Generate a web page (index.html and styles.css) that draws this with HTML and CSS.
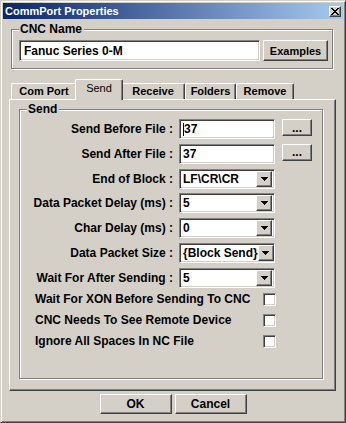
FILE: index.html
```html
<!DOCTYPE html>
<html lang="en">
<head>
    <meta charset="UTF-8">
    <title>CommPort Properties</title>
    <link rel="stylesheet" href="styles.css">
</head>
<body>
    <div class="window">
        <div class="titlebar">
            <span class="title">CommPort Properties</span>
            <span class="close raised">
                <svg width="8" height="7" viewBox="0 0 8 7" shape-rendering="crispEdges">
                    <path d="M0 0h2v1h-2zM6 0h2v1h-2zM1 1h2v1h-2zM5 1h2v1h-2zM2 2h4v1h-4zM3 3h2v1h-2zM2 4h4v1h-4zM1 5h2v1h-2zM5 5h2v1h-2zM0 6h2v1h-2zM6 6h2v1h-2z" fill="#000"/>
                </svg>
            </span>
        </div>

        <div class="group name-group">
            <span class="group-title">CNC Name</span>
            <div class="name-row">
                <div class="field sunken name-field">Fanuc Series 0-M</div>
                <button class="btn raised examples">Examples</button>
            </div>
        </div>

        <div class="tabs">
            <div class="tab tab-com">Com Port</div>
            <div class="tab tab-send active">Send</div>
            <div class="tab tab-receive">Receive</div>
            <div class="tab tab-folders">Folders</div>
            <div class="tab tab-remove">Remove</div>
        </div>

        <div class="panel">
            <div class="group send-group">
                <span class="group-title">Send</span>

                <div class="row">
                    <label class="row-label">Send Before File :</label>
                    <div class="field sunken"><span class="caret"></span>37</div>
                    <button class="btn raised dots">...</button>
                </div>
                <div class="row">
                    <label class="row-label">Send After File :</label>
                    <div class="field sunken">37</div>
                    <button class="btn raised dots">...</button>
                </div>
                <div class="row">
                    <label class="row-label">End of Block :</label>
                    <div class="field sunken combo"><span class="combo-text">LF\CR\CR</span><span class="drop raised"><svg width="7" height="4" viewBox="0 0 7 4" shape-rendering="crispEdges"><path d="M0 0h7v1h-7zM1 1h5v1h-5zM2 2h3v1h-3zM3 3h1v1h-1z" fill="#000"/></svg></span></div>
                </div>
                <div class="row">
                    <label class="row-label">Data Packet Delay (ms) :</label>
                    <div class="field sunken combo"><span class="combo-text">5</span><span class="drop raised"><svg width="7" height="4" viewBox="0 0 7 4" shape-rendering="crispEdges"><path d="M0 0h7v1h-7zM1 1h5v1h-5zM2 2h3v1h-3zM3 3h1v1h-1z" fill="#000"/></svg></span></div>
                </div>
                <div class="row">
                    <label class="row-label">Char Delay (ms) :</label>
                    <div class="field sunken combo"><span class="combo-text">0</span><span class="drop raised"><svg width="7" height="4" viewBox="0 0 7 4" shape-rendering="crispEdges"><path d="M0 0h7v1h-7zM1 1h5v1h-5zM2 2h3v1h-3zM3 3h1v1h-1z" fill="#000"/></svg></span></div>
                </div>
                <div class="row">
                    <label class="row-label">Data Packet Size :</label>
                    <div class="field sunken combo"><span class="combo-text">{Block Send}</span><span class="drop raised"><svg width="7" height="4" viewBox="0 0 7 4" shape-rendering="crispEdges"><path d="M0 0h7v1h-7zM1 1h5v1h-5zM2 2h3v1h-3zM3 3h1v1h-1z" fill="#000"/></svg></span></div>
                </div>
                <div class="row">
                    <label class="row-label">Wait For After Sending :</label>
                    <div class="field sunken combo"><span class="combo-text">5</span><span class="drop raised"><svg width="7" height="4" viewBox="0 0 7 4" shape-rendering="crispEdges"><path d="M0 0h7v1h-7zM1 1h5v1h-5zM2 2h3v1h-3zM3 3h1v1h-1z" fill="#000"/></svg></span></div>
                </div>

                <div class="checks">
                    <div class="check-row">
                        <span class="check-label">Wait For XON Before Sending To CNC</span>
                        <span class="checkbox sunken"></span>
                    </div>
                    <div class="check-row">
                        <span class="check-label">CNC Needs To See Remote Device</span>
                        <span class="checkbox sunken"></span>
                    </div>
                    <div class="check-row">
                        <span class="check-label">Ignore All Spaces In NC File</span>
                        <span class="checkbox sunken"></span>
                    </div>
                </div>
            </div>
        </div>

        <div class="actions">
            <button class="btn raised action">OK</button>
            <button class="btn raised action">Cancel</button>
        </div>
    </div>
</body>
</html>
```

FILE: styles.css
```css
* {
    box-sizing: border-box;
}

body {
    margin: 0;
    background: #d4d0c8;
    font-family: "Liberation Sans", Arial, sans-serif;
    font-size: 12px;
    font-weight: bold;
    color: #000;
}

/* 3d borders */
.raised {
    background: #d4d0c8;
    border: 1px solid;
    border-color: #fff #404040 #404040 #fff;
    box-shadow: inset -1px -1px 0 #808080;
}

.sunken {
    background: #fff;
    border: 1px solid;
    border-color: #808080 #fff #fff #808080;
    box-shadow: inset 1px 1px 0 #404040, inset -1px -1px 0 #d4d0c8;
}

.window {
    width: 346px;
    height: 423px;
    padding: 2px;
    border: 1px solid;
    border-color: #d4d0c8 #404040 #404040 #d4d0c8;
    box-shadow: inset 1px 1px 0 #fff, inset -1px -1px 0 #808080;
    background: #d4d0c8;
}

.titlebar {
    height: 16px;
    padding: 0 2px;
    display: flex;
    align-items: center;
    justify-content: space-between;
    background: linear-gradient(to right, #0a246a, #a6caf0);
}

.title {
    color: #fff;
    font-size: 11px;
}

.close {
    width: 12px;
    height: 11px;
    display: flex;
    align-items: center;
    justify-content: center;
}

/* group boxes */
.group {
    position: relative;
    border: 1px solid #808080;
    box-shadow: inset 1px 1px 0 #fff, 1px 1px 0 #fff;
}

.group-title {
    position: absolute;
    top: -8px;
    left: 7px;
    padding: 0 2px 0 1px;
    background: #d4d0c8;
    line-height: 14px;
}

.name-group {
    width: 322px;
    height: 40px;
    margin: 10px 0 0 8px;
    padding: 10px 0 0 7px;
}

.name-row {
    display: flex;
    gap: 3px;
}

.field {
    height: 20px;
    width: 96px;
    padding-left: 3px;
    display: flex;
    align-items: center;
}

.name-field {
    width: 241px;
    height: 21px;
    padding-left: 4px;
}

.btn {
    font-family: inherit;
    font-weight: bold;
    font-size: 12px;
    color: #000;
    padding: 0;
    margin: 0;
}

.examples {
    width: 65px;
    height: 21px;
    font-size: 11px;
}

/* tabs */
.tabs {
    height: 20px;
    margin: 10px 0 0 6px;
    padding-left: 2px;
    display: flex;
    align-items: flex-end;
}

.tab {
    height: 16px;
    font-size: 11px;
    text-align: center;
    line-height: 14px;
    border-top: 1px solid #fff;
    border-left: 1px solid #fff;
    border-right: 1px solid #404040;
    box-shadow: inset -1px 0 0 #808080;
    border-radius: 2px 2px 0 0;
}

.tab-com { width: 66px; }
.tab-send { width: 44px; }
.tab-receive { width: 64px; }
.tab-folders { width: 51px; }
.tab-remove { width: 58px; }

.tab.active {
    position: relative;
    z-index: 1;
    height: 21px;
    width: 48px;
    margin: 0 -2px -1px;
    padding-top: 1px;
    background: #d4d0c8;
    font-weight: normal;
}

.panel {
    width: 327px;
    height: 292px;
    margin-left: 6px;
    padding: 9px 0 0 9px;
    border: 1px solid;
    border-color: #fff #404040 #404040 #fff;
    box-shadow: inset -1px -1px 0 #808080;
}

.send-group {
    width: 304px;
    height: 270px;
    padding-top: 9px;
}

.row {
    display: flex;
    align-items: center;
    height: 20px;
    margin-bottom: 4.8px;
}

.row-label {
    width: 153px;
    margin-right: 6px;
    text-align: right;
}

.caret {
    width: 1px;
    height: 13px;
    background: #000;
}

.dots {
    width: 30px;
    height: 17px;
    margin: -3px 0 0 7px;
    line-height: 10px;
}

.combo {
    padding-right: 2px;
    justify-content: space-between;
}

.combo-text {
    white-space: nowrap;
}

.drop {
    width: 16px;
    height: 16px;
    flex: none;
    display: flex;
    align-items: center;
    justify-content: center;
}

.checks {
    margin-top: 2px;
    padding-left: 15px;
    display: flex;
    flex-direction: column;
    gap: 8px;
}

.check-row {
    display: flex;
    align-items: center;
    height: 13px;
}

.check-label {
    width: 228px;
}

.checkbox {
    width: 13px;
    height: 13px;
}

.actions {
    margin-top: 3px;
    display: flex;
    justify-content: center;
    gap: 3px;
}

.action {
    width: 72px;
    height: 20px;
}
```
